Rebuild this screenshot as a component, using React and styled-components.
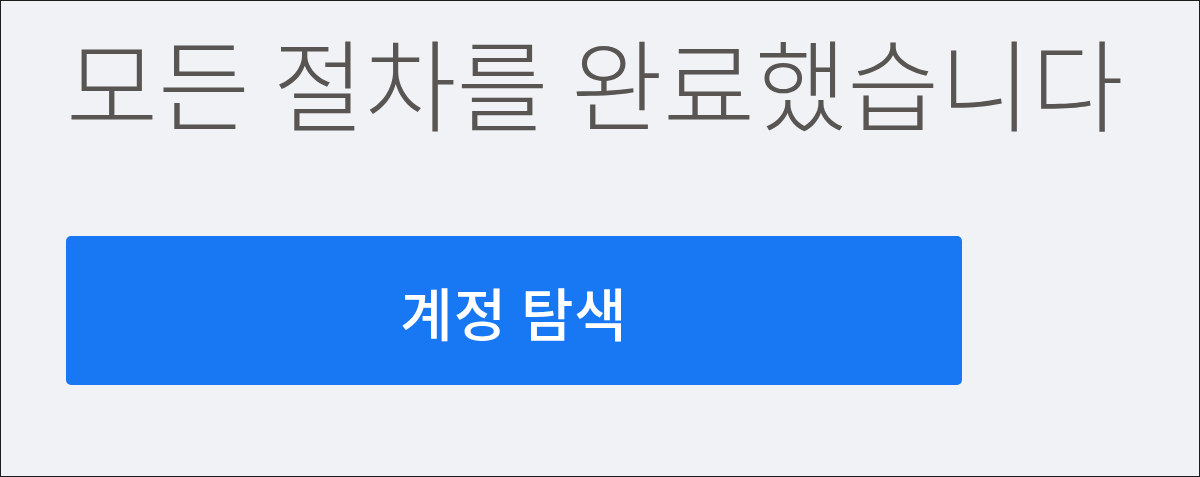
import React from "react";
import styled, { createGlobalStyle } from "styled-components";

const Global = createGlobalStyle`
  html, body { margin: 0; padding: 0; }
  body { font-family: "Noto Sans CJK KR", "Noto Sans", sans-serif; }
`;

const Page = styled.div`
  box-sizing: border-box;
  width: 1200px;
  height: 477px;
  border: 1px solid #1c1c1c;
  background: #f0f2f5;
  padding: 13px 0 0 65px;
  display: flex;
  flex-direction: column;
  align-items: flex-start;
`;

const Title = styled.h1`
  margin: 0;
  font-size: 100px;
  font-weight: 300;
  line-height: 134px;
  color: #595553;
  letter-spacing: 0.1px;
  white-space: nowrap;
`;

const Button = styled.button`
  margin-top: 88px;
  width: 896px;
  height: 149px;
  border: none;
  border-radius: 5px;
  background: #1877f2;
  color: #ffffff;
  font-family: inherit;
  font-size: 57px;
  font-weight: 500;
  letter-spacing: 1px;
  cursor: pointer;
  display: flex;
  align-items: center;
  justify-content: center;
`;

export default function App() {
  return (
    <>
      <Global />
      <Page>
        <Title>모든 절차를 완료했습니다</Title>
        <Button>계정 탐색</Button>
      </Page>
    </>
  );
}
